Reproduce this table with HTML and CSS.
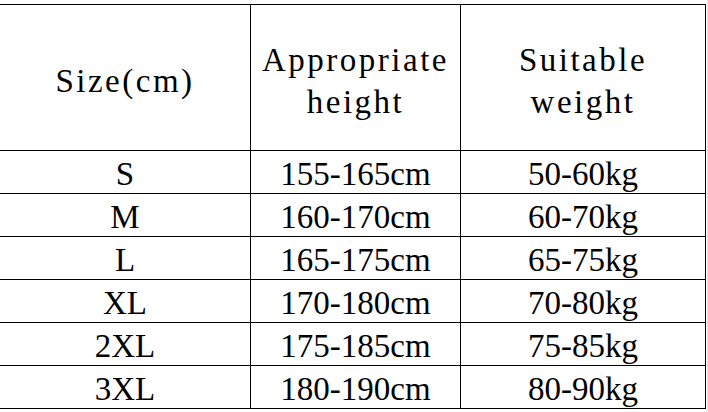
FILE: index.html
```html
<!DOCTYPE html>
<html lang="en">
<head>
    <meta charset="UTF-8">
    <meta name="viewport" content="width=device-width, initial-scale=1.0">
    <title>Size chart</title>
    <link rel="stylesheet" href="styles.css">
</head>
<body>
    <div class="page">
        <div class="chart">
            <div class="cell head">Size(cm)</div>
            <div class="cell head">Appropriate<br>height</div>
            <div class="cell head">Suitable<br>weight</div>

            <div class="cell">S</div>
            <div class="cell">155-165cm</div>
            <div class="cell">50-60kg</div>

            <div class="cell">M</div>
            <div class="cell">160-170cm</div>
            <div class="cell">60-70kg</div>

            <div class="cell">L</div>
            <div class="cell">165-175cm</div>
            <div class="cell">65-75kg</div>

            <div class="cell">XL</div>
            <div class="cell">170-180cm</div>
            <div class="cell">70-80kg</div>

            <div class="cell">2XL</div>
            <div class="cell">175-185cm</div>
            <div class="cell">75-85kg</div>

            <div class="cell">3XL</div>
            <div class="cell">180-190cm</div>
            <div class="cell">80-90kg</div>
        </div>
    </div>
</body>
</html>
```

FILE: styles.css
```css
body {
    margin: 0;
    padding: 0;
    background-color: white;
    font-family: "Liberation Serif", "DejaVu Serif Condensed", "DejaVu Serif", serif;
    color: #000;
    overflow: hidden;
}
.page {
    box-sizing: border-box;
    width: 708px;
    height: 412px;
    padding-top: 4px;
    border-right: 1px solid #e4e4e4;
}
.chart {
    display: grid;
    grid-template-columns: 251px 210px 245px;
    grid-auto-rows: 43px;
    grid-template-rows: 146px;
    width: 706px;
    border-top: 1px solid #000;
}
.cell {
    box-sizing: border-box;
    display: flex;
    align-items: center;
    justify-content: center;
    text-align: center;
    border-right: 1px solid #000;
    border-bottom: 1px solid #000;
    padding-top: 3px;
    font-size: 33px;
    line-height: 42px;
}
/* header row */
.head {
    padding-top: 6px;
    letter-spacing: 2.5px;
}
```
